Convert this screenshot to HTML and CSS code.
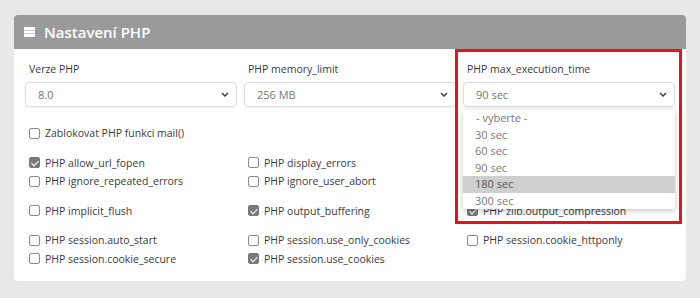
FILE: index.html
```html
<!DOCTYPE html>
<html lang="cs">
<head>
<meta charset="utf-8">
<title>Nastavení PHP</title>
<link rel="stylesheet" href="styles.css">
</head>
<body>
<div class="card">
  <div class="card-header">
    <svg class="hdr-icon" width="11" height="10" viewBox="0 0 11 10"><rect x="0" y="0" width="11" height="3" rx="0.5" fill="#fff"/><rect x="0" y="3.6" width="11" height="2.8" rx="0.5" fill="#fff"/><rect x="0" y="7" width="11" height="3" rx="0.5" fill="#fff"/></svg>
    <span>Nastavení PHP</span>
  </div>
  <div class="card-body">
    <div class="grid selects">
      <div class="field">
        <label class="lbl">Verze PHP</label>
        <div class="select"><span>8.0</span><svg class="chev" width="8" height="5" viewBox="0 0 8 5"><path d="M1 1l3 3 3-3" fill="none" stroke="#444" stroke-width="1.5"/></svg></div>
      </div>
      <div class="field">
        <label class="lbl">PHP memory_limit</label>
        <div class="select"><span>256 MB</span><svg class="chev" width="8" height="5" viewBox="0 0 8 5"><path d="M1 1l3 3 3-3" fill="none" stroke="#444" stroke-width="1.5"/></svg></div>
      </div>
      <div class="field open">
        <label class="lbl">PHP max_execution_time</label>
        <div class="select"><span>90 sec</span><svg class="chev" width="8" height="5" viewBox="0 0 8 5"><path d="M1 1l3 3 3-3" fill="none" stroke="#444" stroke-width="1.5"/></svg></div>
        <ul class="dropdown">
          <li class="first">- vyberte -</li>
          <li>30 sec</li>
          <li>60 sec</li>
          <li>90 sec</li>
          <li class="hl">180 sec</li>
          <li>300 sec</li>
        </ul>
        <div class="highlight-box"></div>
      </div>
    </div>

    <div class="group">
      <div class="check"><span class="cb"></span>Zablokovat PHP funkci mail()</div>
    </div>

    <div class="grid group">
      <div class="check on"><span class="cb"></span>PHP allow_url_fopen</div>
      <div class="check"><span class="cb"></span>PHP display_errors</div>
      <div></div>
      <div class="check"><span class="cb"></span>PHP ignore_repeated_errors</div>
      <div class="check"><span class="cb"></span>PHP ignore_user_abort</div>
      <div></div>
    </div>

    <div class="grid group">
      <div class="check"><span class="cb"></span>PHP implicit_flush</div>
      <div class="check on"><span class="cb"></span>PHP output_buffering</div>
      <div class="check on"><span class="cb"></span>PHP zlib.output_compression</div>
    </div>

    <div class="grid group">
      <div class="check"><span class="cb"></span>PHP session.auto_start</div>
      <div class="check"><span class="cb"></span>PHP session.use_only_cookies</div>
      <div class="check"><span class="cb"></span>PHP session.cookie_httponly</div>
      <div class="check"><span class="cb"></span>PHP session.cookie_secure</div>
      <div class="check on"><span class="cb"></span>PHP session.use_cookies</div>
      <div></div>
    </div>
  </div>
</div>
</body>
</html>
```

FILE: styles.css
```css
* { box-sizing: border-box; }
html, body { margin: 0; }
body {
  background: #e8e8e8;
  padding: 15px 14px;
  font-family: "Open Sans", "DejaVu Sans", sans-serif;
  color: #3a3a3a;
}
.card {
  width: 672px;
  background: #fff;
  border-radius: 4px;
}
.card-header {
  height: 34px;
  background: #9a9a9a;
  border-radius: 4px 4px 0 0;
  color: #fff;
  display: flex;
  align-items: center;
  padding-left: 10px;
  gap: 9px;
  font-size: 15px;
  font-weight: 600;
}
.card-body {
  padding: 13px 10px 13px 11px;
}
.grid {
  display: grid;
  grid-template-columns: 212px 212px 212px;
  column-gap: 7px;
}
.field { position: relative; }
.lbl {
  display: block;
  font-size: 10.5px;
  line-height: 14px;
  margin-left: 4px;
  margin-bottom: 6px;
  color: #3a3a3a;
}
.select {
  height: 25px;
  border: 1px solid #dcdcdc;
  border-radius: 4px;
  box-shadow: 0 1px 2px rgba(0,0,0,0.06);
  display: flex;
  align-items: center;
  justify-content: space-between;
  padding: 0 7px 0 12px;
  font-size: 11px;
  color: #777;
}
.dropdown {
  position: absolute;
  left: 0;
  top: 48px;
  width: 212px;
  margin: 0;
  padding: 0;
  list-style: none;
  background: #fff;
  box-shadow: 0 2px 6px rgba(0,0,0,0.22);
  border-radius: 2px;
  z-index: 3;
}
.dropdown li {
  height: 16.5px;
  line-height: 16.5px;
  padding-left: 12px;
  font-size: 11px;
  color: #7a7a7a;
}
.dropdown li.first { padding-left: 13px; }
.dropdown li.hl { background: #cfcfcf; color: #555; }
.highlight-box {
  position: absolute;
  left: -8px;
  top: -13px;
  width: 227px;
  height: 175px;
  border: 3px solid #e3141f;
  z-index: 4;
  pointer-events: none;
}
.group { margin-top: 17px; }
.group + .group { margin-top: 11px; }
.selects + .group { margin-top: 17px; }
.check {
  display: flex;
  align-items: center;
  height: 18.5px;
  padding-left: 4px;
  font-size: 10.5px;
  color: #3a3a3a;
}
.cb {
  width: 11px;
  height: 11px;
  border: 1px solid #8a8a8a;
  border-radius: 2px;
  margin-right: 5px;
  flex: none;
  position: relative;
}
.check.on .cb {
  background: #7a7a7a;
  border-color: #7a7a7a;
}
.check.on .cb::after {
  content: "";
  position: absolute;
  left: 3px;
  top: 0.5px;
  width: 3px;
  height: 6px;
  border: solid #fff;
  border-width: 0 1.6px 1.6px 0;
  transform: rotate(45deg);
}
```
